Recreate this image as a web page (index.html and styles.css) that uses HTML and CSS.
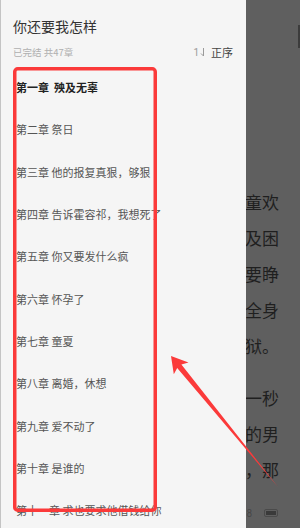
FILE: index.html
```html
<!DOCTYPE html>
<html lang="zh">
<head>
<meta charset="utf-8">
<link rel="stylesheet" href="styles.css">
</head>
<body>
<div class="screen">
  <aside class="drawer">
    <h1 class="title">你还要我怎样</h1>
    <div class="meta">
      <span class="status">已完结 共47章</span>
      <span class="sort"><span class="sort-num">1</span><svg class="sort-icon" width="5" height="10" viewBox="0 0 5 10"><path d="M3.5 1 V9 L1 6.5" fill="none" stroke="#9a9a9a" stroke-width="1"/></svg><span class="sort-label">正序</span></span>
    </div>
    <ul class="chapters">
      <li class="chapter current">第一章&nbsp; 殃及无辜</li>
      <li class="chapter">第二章 祭日</li>
      <li class="chapter">第三章 他的报复真狠，够狠</li>
      <li class="chapter">第四章 告诉霍容祁，我想死了</li>
      <li class="chapter">第五章 你又要发什么疯</li>
      <li class="chapter">第六章 怀孕了</li>
      <li class="chapter">第七章 童夏</li>
      <li class="chapter">第八章 离婚，休想</li>
      <li class="chapter">第九章 爱不动了</li>
      <li class="chapter">第十章 是谁的</li>
      <li class="chapter">第十一章 求也要求他借钱给你</li>
    </ul>
  </aside>
  <main class="reader">
    <div class="page">
      <p class="para"><span class="line">她从小就和童欢</span><span class="line">的一切都是及困</span><span class="line">她一直想要睁</span><span class="line">寒意遍布全身</span><span class="line">如同坠入地狱。</span></p>
      <p class="para"><span class="line">直到最后一秒</span><span class="line">眼前这个的男</span><span class="line">人说，那</span></p>
    </div>
    <div class="footer">
      <span class="time">18:38</span>
      <span class="battery"><span class="battery-level"></span></span>
    </div>
    <span class="edge-bar"></span>
  </main>
  <svg class="annotation" width="300" height="528" viewBox="0 0 300 528">
    <rect x="14.75" y="68.75" width="140.5" height="441.5" rx="3" fill="none" stroke="#fb3a3a" stroke-width="3.5"/>
    <polygon points="171,356 188.5,362.5 181.4,364.6 278,487 177.2,368 173.8,374.3" fill="#fb3a3a"/>
  </svg>
</div>
</body>
</html>
```
FILE: styles.css
```css
* { box-sizing: border-box; }
html, body { margin: 0; padding: 0; }
body {
  width: 300px;
  height: 528px;
  overflow: hidden;
  font-family: "Noto Sans CJK SC", "Noto Sans", sans-serif;
  background: #5f5f5f;
}
.screen {
  position: relative;
  display: flex;
  width: 300px;
  height: 528px;
}
.drawer {
  width: 246px;
  flex: none;
  height: 528px;
  background: #f5f5f5;
  border-left: 1px solid #c4c4c4;
  padding: 16px 0 0 12px;
  overflow: hidden;
}
.title {
  margin: 0;
  font-size: 14px;
  line-height: 20px;
  font-weight: normal;
  color: #333;
}
.meta {
  margin-top: 8px;
  height: 16px;
  display: flex;
  align-items: center;
  justify-content: space-between;
  padding-right: 13px;
}
.status {
  font-size: 9.5px;
  color: #b0b0b0;
  font-family: "Noto Sans CJK SC", Roboto, sans-serif;
}
.sort {
  display: flex;
  align-items: center;
}
.sort-num {
  font-family: Roboto, sans-serif;
  font-size: 10px;
  color: #9a9a9a;
}
.sort-icon { margin-left: 1px; }
.sort-label {
  margin-left: 6px;
  font-size: 11px;
  color: #444;
}
.chapters {
  list-style: none;
  margin: 6px 0 0;
  padding: 0 0 0 3px;
}
.chapter {
  height: 42.3px;
  display: flex;
  align-items: center;
  font-size: 11px;
  color: #555;
  white-space: nowrap;
}
.chapter.current {
  font-weight: bold;
  color: #222;
}
.reader {
  position: relative;
  flex: 1;
  min-width: 0;
  height: 528px;
  background: #5f5f5f;
  overflow: hidden;
  display: flex;
  flex-direction: column;
}
.page {
  padding: 184px 21px 0 0;
}
.para {
  margin: 0 0 16px;
  display: flex;
  flex-direction: column;
}
.line {
  display: flex;
  justify-content: flex-end;
  white-space: nowrap;
  font-size: 17px;
  line-height: 36px;
  height: 36px;
  color: #1f1f1f;
}
.footer {
  margin-top: auto;
  height: 10px;
  margin-bottom: 10px;
  display: flex;
  justify-content: flex-end;
  align-items: center;
  padding-right: 22px;
  gap: 12px;
  white-space: nowrap;
}
.time {
  font-family: Roboto, sans-serif;
  font-size: 10px;
  color: #474747;
}
.battery {
  width: 16px;
  height: 8px;
  border: 1px solid #4a4a4a;
  border-radius: 2px;
  padding: 1px;
  display: flex;
}
.battery-level {
  width: 10px;
  background: #3a3a3a;
}
.edge-bar {
  position: absolute;
  right: 0;
  top: 25px;
  width: 2px;
  height: 23px;
  background: #3c3c3c;
}
.annotation {
  position: absolute;
  left: 0;
  top: 0;
  pointer-events: none;
}
```
